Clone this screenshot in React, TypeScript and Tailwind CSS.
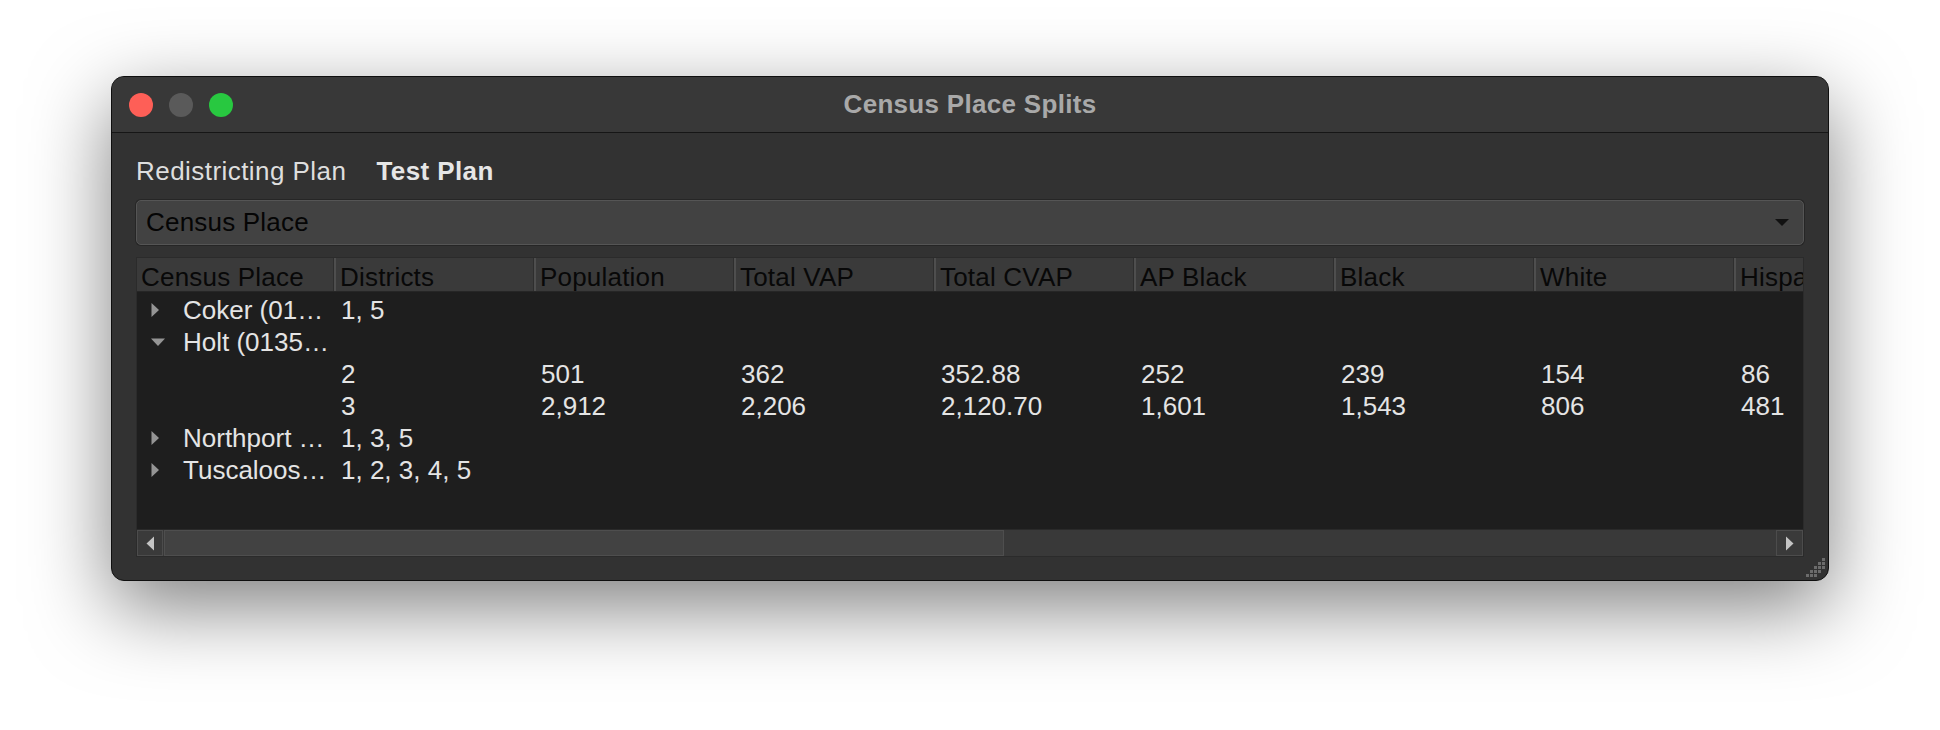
import React from "react";

type Row = {
  name?: string;
  expander?: "closed" | "open";
  values: string[];
};

const columns = [
  { label: "Census Place", width: "w-[197px]" },
  { label: "Districts", width: "w-[200px]" },
  { label: "Population", width: "w-[200px]" },
  { label: "Total VAP", width: "w-[200px]" },
  { label: "Total CVAP", width: "w-[200px]" },
  { label: "AP Black", width: "w-[200px]" },
  { label: "Black", width: "w-[200px]" },
  { label: "White", width: "w-[200px]" },
  { label: "Hispanic", width: "w-[200px]" },
];

const rows: Row[] = [
  { name: "Coker (01…", expander: "closed", values: ["1, 5"] },
  { name: "Holt (0135…", expander: "open", values: [] },
  { values: ["2", "501", "362", "352.88", "252", "239", "154", "86"] },
  { values: ["3", "2,912", "2,206", "2,120.70", "1,601", "1,543", "806", "481"] },
  { name: "Northport …", expander: "closed", values: ["1, 3, 5"] },
  { name: "Tuscaloos…", expander: "closed", values: ["1, 2, 3, 4, 5"] },
];

function Expander({ state }: { state?: "closed" | "open" }) {
  if (!state) return null;
  return state === "closed" ? (
    <svg width="10" height="16" viewBox="0 0 10 16" className="shrink-0">
      <path d="M1.5 1 L9 8 L1.5 15 Z" fill="#959595" />
    </svg>
  ) : (
    <svg width="16" height="10" viewBox="0 0 16 10" className="shrink-0">
      <path d="M1 1.5 L15 1.5 L8 9 Z" fill="#959595" />
    </svg>
  );
}

function TrafficLights() {
  return (
    <div className="flex items-center gap-[16px] pl-[17px]">
      <div className="h-[24px] w-[24px] rounded-full bg-[#fe5f57]" />
      <div className="h-[24px] w-[24px] rounded-full bg-[#5a5a5a]" />
      <div className="h-[24px] w-[24px] rounded-full bg-[#28c840]" />
    </div>
  );
}

function ScrollBar() {
  return (
    <div className="flex h-[27px] shrink-0 items-stretch border-t border-[#2a2a2a] bg-[#393939]">
      <div className="flex w-[26px] items-center justify-center border border-[#4c4c4c] bg-[#3a3a3a]">
        <svg width="9" height="15" viewBox="0 0 9 15">
          <path d="M8 0.5 L8 14.5 L0.5 7.5 Z" fill="#c4c4c4" />
        </svg>
      </div>
      <div className="ml-[1px] w-[840px] border border-[#4e4e4e] bg-[#424242]" />
      <div className="flex-1" />
      <div className="flex w-[27px] items-center justify-center border border-[#4c4c4c] bg-[#3a3a3a]">
        <svg width="9" height="15" viewBox="0 0 9 15">
          <path d="M1 0.5 L1 14.5 L8.5 7.5 Z" fill="#c4c4c4" />
        </svg>
      </div>
    </div>
  );
}

export default function App() {
  return (
    <div
      className="h-[730px] w-[1940px] overflow-hidden bg-white pl-[111px] pt-[76px]"
      style={{ fontFamily: '"Liberation Sans", Arial, sans-serif' }}
    >
      <div className="relative flex h-[505px] w-[1718px] flex-col overflow-hidden rounded-[13px] border border-[#0f0f0f] bg-[#323232] shadow-[0_26px_80px_rgba(0,0,0,0.5)]">
        <div className="grid h-[56px] shrink-0 grid-cols-[1fr_auto_1fr] items-center border-b border-[#161616] bg-[#383838]">
          <TrafficLights />
          <div className="text-[26px] font-bold tracking-[0.3px] text-[#a9a9a9]">
            Census Place Splits
          </div>
          <div />
        </div>

        <div className="flex flex-1 flex-col px-[24px] pt-[22px]">
          <div className="flex h-[32px] items-center text-[26px] text-[#dedede]">
            <span className="tracking-[0.45px]">Redistricting Plan</span>
            <span className="ml-[30px] font-bold tracking-[0.4px] text-[#e6e6e6]">Test Plan</span>
          </div>

          <div className="mt-[13px] flex h-[45px] items-center justify-between rounded-[5px] border border-[#555555] bg-[#424242] pl-[9px] pr-[13px] shadow-[0_0_0_1px_#262626]">
            <span className="text-[26px] tracking-[0.2px] text-[#050505]">Census Place</span>
            <svg width="16" height="9" viewBox="0 0 16 9">
              <path d="M1 1 L15 1 L8 8 Z" fill="#111111" />
            </svg>
          </div>

          <div className="mt-[12px] flex h-[300px] flex-col overflow-hidden border border-[#2b2b2b] bg-[#1e1e1e]">
            <div className="flex h-[34px] shrink-0 border-b border-[#262626] bg-[#3a3a3a]">
              {columns.map((c, i) => (
                <div
                  key={c.label}
                  className={`${c.width} flex shrink-0 items-center overflow-hidden whitespace-nowrap border-r border-r-[#2e2e2e] pl-[4px] pt-[5px] text-[26px] tracking-[0.2px] text-[#080808] ${
                    i === 0 ? "" : "border-l-2 border-l-[#4e4e4e]"
                  }`}
                >
                  {c.label}
                </div>
              ))}
            </div>

            <div className="flex-1 overflow-hidden pt-[2px] text-[26px] text-[#e4e4e4]">
              {rows.map((r, ri) => (
                <div key={ri} className="flex h-[32px] items-center whitespace-nowrap">
                  <div className="flex w-[197px] shrink-0 items-center overflow-hidden">
                    <div className="flex w-[46px] shrink-0 items-center justify-start pl-[13px]">
                      <Expander state={r.expander} />
                    </div>
                    <span>{r.name ?? ""}</span>
                  </div>
                  {r.values.map((v, vi) => (
                    <div key={vi} className="w-[200px] shrink-0 pl-[7px]">
                      {v}
                    </div>
                  ))}
                </div>
              ))}
            </div>

            <ScrollBar />
          </div>
        </div>

        <svg
          className="absolute bottom-[2px] right-[2px]"
          width="22"
          height="22"
          viewBox="0 0 22 22"
        >
          {[
            [18, 2],
            [14, 6],
            [18, 6],
            [10, 10],
            [14, 10],
            [18, 10],
            [6, 14],
            [10, 14],
            [14, 14],
            [2, 18],
            [6, 18],
            [10, 18],
          ].map(([x, y], i) => (
            <rect key={i} x={x} y={y} width="3" height="3" fill="#6b6b6b" />
          ))}
        </svg>
      </div>
    </div>
  );
}
